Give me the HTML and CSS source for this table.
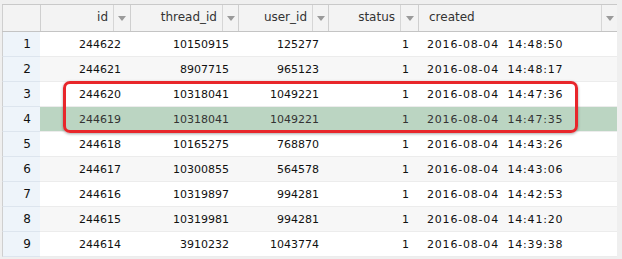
FILE: index.html
```html
<!DOCTYPE html>
<html>
<head>
<meta charset="utf-8">
<link rel="stylesheet" href="styles.css">
</head>
<body>
<div class="frame">
  <div class="grid">
    <div class="hrow">
      <div class="hcell corner"></div>
      <div class="hcell c-id"><span class="label num">id</span><span class="arrow"></span></div>
      <div class="hcell c-thread"><span class="label num">thread_id</span><span class="arrow"></span></div>
      <div class="hcell c-user"><span class="label num">user_id</span><span class="arrow"></span></div>
      <div class="hcell c-status"><span class="label num">status</span><span class="arrow"></span></div>
      <div class="hcell c-created"><span class="label txt">created</span><span class="arrow"></span></div>
    </div>
    <div class="row"><div class="rn">1</div><div class="c c-id">244622</div><div class="c c-thread">10150915</div><div class="c c-user">125277</div><div class="c c-status">1</div><div class="c c-created">2016-08-04&nbsp;&nbsp;14:48:50</div></div>
    <div class="row alt"><div class="rn">2</div><div class="c c-id">244621</div><div class="c c-thread">8907715</div><div class="c c-user">965123</div><div class="c c-status">1</div><div class="c c-created">2016-08-04&nbsp;&nbsp;14:48:17</div></div>
    <div class="row"><div class="rn">3</div><div class="c c-id">244620</div><div class="c c-thread">10318041</div><div class="c c-user">1049221</div><div class="c c-status">1</div><div class="c c-created">2016-08-04&nbsp;&nbsp;14:47:36</div></div>
    <div class="row sel"><div class="rn">4</div><div class="c c-id">244619</div><div class="c c-thread">10318041</div><div class="c c-user">1049221</div><div class="c c-status">1</div><div class="c c-created">2016-08-04&nbsp;&nbsp;14:47:35</div></div>
    <div class="row"><div class="rn">5</div><div class="c c-id">244618</div><div class="c c-thread">10165275</div><div class="c c-user">768870</div><div class="c c-status">1</div><div class="c c-created">2016-08-04&nbsp;&nbsp;14:43:26</div></div>
    <div class="row alt"><div class="rn">6</div><div class="c c-id">244617</div><div class="c c-thread">10300855</div><div class="c c-user">564578</div><div class="c c-status">1</div><div class="c c-created">2016-08-04&nbsp;&nbsp;14:43:06</div></div>
    <div class="row"><div class="rn">7</div><div class="c c-id">244616</div><div class="c c-thread">10319897</div><div class="c c-user">994281</div><div class="c c-status">1</div><div class="c c-created">2016-08-04&nbsp;&nbsp;14:42:53</div></div>
    <div class="row alt"><div class="rn">8</div><div class="c c-id">244615</div><div class="c c-thread">10319981</div><div class="c c-user">994281</div><div class="c c-status">1</div><div class="c c-created">2016-08-04&nbsp;&nbsp;14:41:20</div></div>
    <div class="row"><div class="rn">9</div><div class="c c-id">244614</div><div class="c c-thread">3910232</div><div class="c c-user">1043774</div><div class="c c-status">1</div><div class="c c-created">2016-08-04&nbsp;&nbsp;14:39:38</div></div>
  </div>
  <div class="highlight"></div>
</div>
</body>
</html>
```
FILE: styles.css
```css
* { box-sizing: border-box; }
html, body { margin: 0; padding: 0; }
body {
  width: 622px;
  height: 259px;
  overflow: hidden;
  background: #ffffff;
  font-family: "DejaVu Sans", "Liberation Sans", sans-serif;
  font-size: 11px;
  color: #111;
}
.frame {
  position: relative;
  width: 622px;
  height: 259px;
  padding: 4px 5px 0 2px;
  background: #efefef;
}
.grid {
  width: 615px;
  background: #fff;
}
.hrow, .row {
  display: grid;
  grid-template-columns: 38px 90px 108px 90px 90px 199px;
}
.hrow {
  height: 28px;
  background: #f3f3f3;
  border-top: 1px solid #c9c9c9;
  border-bottom: 1px solid #c4c4c4;
}
.hcell {
  display: flex;
  align-items: stretch;
  border-left: 1px solid #cfcfcf;
  color: #333;
  font-size: 12px;
}
.label {
  flex: 1;
  display: flex;
  align-items: center;
  padding: 0 5px 2px 10px;
}
.label.num { justify-content: flex-end; }
.label.txt { justify-content: flex-start; }
.arrow {
  width: 17px;
  border-left: 1px solid #d6d6d6;
  display: flex;
  align-items: center;
  justify-content: center;
}
.arrow::after {
  content: "";
  width: 0;
  height: 0;
  border-left: 4px solid transparent;
  border-right: 4px solid transparent;
  border-top: 5px solid #9a9a9a;
  margin-top: 1px;
}
.c-thread .arrow, .c-user .arrow, .c-created .arrow { width: 16px; }
.c-status .arrow { width: 18px; }

.row {
  height: 25px;
  background: #ffffff;
  border-bottom: 1px solid #ececec;
}
.row.alt { background: #f7f7f7; }
.row.sel { background: #bbd5c2; color: #333; }
.rn {
  background: #eef4fa;
  border-left: 1px solid #cfcfcf;
  border-bottom: 1px solid #dde5ee;
  margin-bottom: -1px;
  display: flex;
  align-items: center;
  justify-content: flex-end;
  padding-right: 9px;
  color: #111;
  font-size: 12px;
}
.c {
  display: flex;
  align-items: center;
  justify-content: flex-end;
  padding-right: 9px;
  white-space: nowrap;
}
.c.c-created {
  justify-content: flex-start;
  padding-left: 9px;
  letter-spacing: 0.8px;
}
.highlight {
  position: absolute;
  left: 63px;
  top: 81px;
  width: 515px;
  height: 52px;
  border: 3px solid #e8262b;
  border-radius: 7px;
  box-shadow: 0 1px 3px rgba(0,0,0,0.35);
}
```
